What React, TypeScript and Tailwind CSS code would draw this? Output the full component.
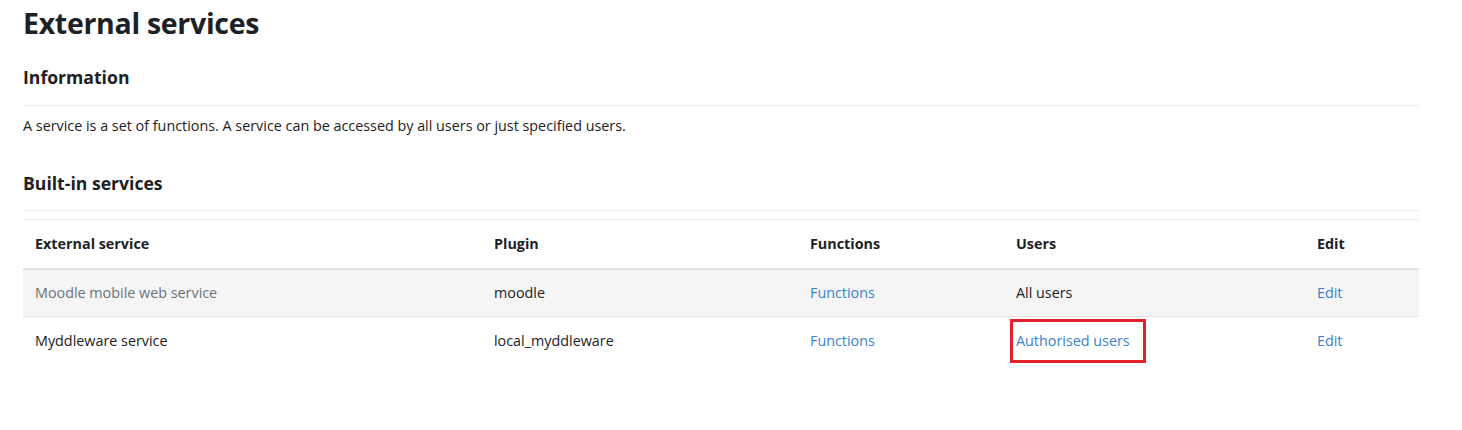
import React from 'react'

type Row = {
  name: string
  plugin: string
  users: string
  usersLink?: boolean
  dimmed?: boolean
  highlight?: boolean
}

const rows: Row[] = [
  { name: 'Moodle mobile web service', plugin: 'moodle', users: 'All users', dimmed: true },
  { name: 'Myddleware service', plugin: 'local_myddleware', users: 'Authorised users', usersLink: true, highlight: true },
]

const link = 'text-[#3b82d0]'

const App = () => {
  return (
    <div className="min-h-[430px] bg-white text-[#1d2125] font-['Open_Sans','Noto_Sans',sans-serif]">
      <div className="ml-[23px] w-[1396px] pt-[3px]">
        <h2 className="text-[28.5px] leading-[40px] font-bold tracking-[-0.3px]">External services</h2>

        <h3 className="mt-[20px] text-[17.6px] leading-[28px] font-bold">Information</h3>
        <div className="mt-[14px] border-t border-[#ebedef]" />
        <p className="mt-[9px] text-[14.35px] leading-[22px]">
          A service is a set of functions. A service can be accessed by all users or just specified users.
        </p>

        <h3 className="mt-[32px] text-[17.6px] leading-[28px] font-bold">Built-in services</h3>
        <div className="mt-[13px] border-t border-[#ebedef]" />

        <table className="mt-[8px] w-full border-t border-[#ebedef] text-[14.35px] border-collapse">
          <colgroup>
            <col className="w-[459px]" />
            <col className="w-[316px]" />
            <col className="w-[206px]" />
            <col className="w-[301px]" />
            <col className="w-[114px]" />
          </colgroup>
          <thead>
            <tr className="h-[49px] border-b-2 border-[#dee2e6] text-left">
              <th className="px-3 font-bold">External service</th>
              <th className="px-3 font-bold">Plugin</th>
              <th className="px-3 font-bold">Functions</th>
              <th className="px-3 font-bold">Users</th>
              <th className="px-3 font-bold">Edit</th>
            </tr>
          </thead>
          <tbody>
            {rows.map((r, i) => (
              <tr
                key={r.name}
                className={`h-[48px] ${i === 0 ? 'bg-[#f5f5f5] border-b border-[#e3e5e7]' : ''}`}
              >
                <td className={`px-3 ${r.dimmed ? 'text-[#6a737b]' : ''}`}>{r.name}</td>
                <td className="px-3">{r.plugin}</td>
                <td className={`px-3 ${link}`}>Functions</td>
                <td className="px-3">
                  {r.highlight ? (
                    <span className={`inline-block -ml-[6px] pl-[3px] pr-[13px] py-[9px] border-[3px] border-[#e5202a] leading-[20px] ${link}`}>
                      {r.users}
                    </span>
                  ) : (
                    <span className={r.usersLink ? link : ''}>{r.users}</span>
                  )}
                </td>
                <td className={`px-3 ${link}`}>Edit</td>
              </tr>
            ))}
          </tbody>
        </table>
      </div>
    </div>
  )
}

export default App
